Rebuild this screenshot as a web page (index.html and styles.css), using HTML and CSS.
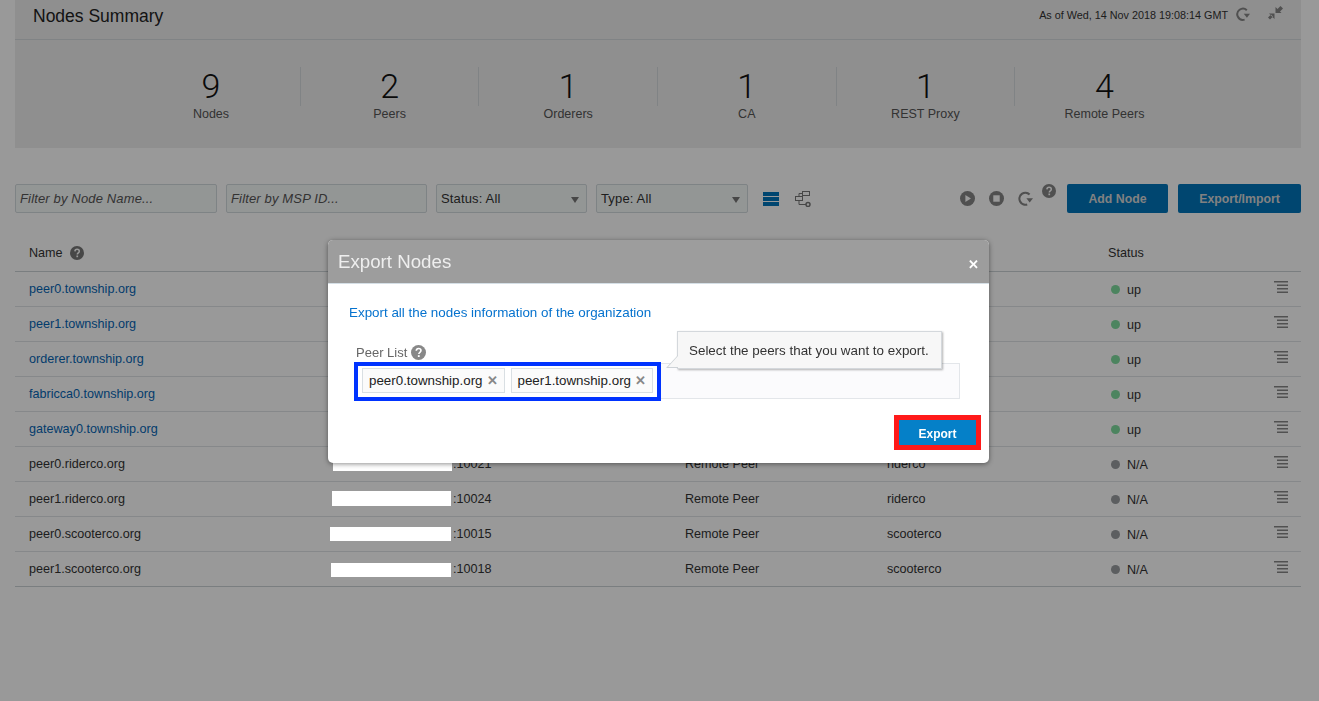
FILE: index.html
```html
<!DOCTYPE html>
<html lang="en">
<head>
    <meta charset="UTF-8">
    <title>Nodes Summary</title>
    <link rel="stylesheet" href="styles.css">
</head>
<body>

<svg class="sprite" width="0" height="0">
    <symbol id="i-refresh" viewBox="0 0 14 14">
        <path d="M10.8 3.200A5.600 5.600 0 1 0 8.600 12.600" fill="none" stroke="currentColor" stroke-width="2"/>
        <path d="M7.800 6.800h6.200l-3.100 4z" fill="currentColor"/>
    </symbol>
    <symbol id="i-help" viewBox="0 0 14 14">
        <circle cx="7" cy="7" r="7" fill="currentColor"/>
        <path d="M4.900 5.400C5 4 5.900 3.300 7.100 3.300c1.300 0 2.200.8 2.200 1.900 0 1.700-2 1.600-2 3.300" fill="none" stroke="#fff" stroke-width="1.500"/>
        <rect x="6.400" y="9.500" width="1.700" height="1.700" fill="#fff"/>
    </symbol>
    <symbol id="i-menu" viewBox="0 0 14 13">
        <rect x="0" y="0" width="14" height="1.500" fill="currentColor"/>
        <rect x="3" y="3.500" width="11" height="1.500" fill="currentColor"/>
        <rect x="3" y="7" width="11" height="1.500" fill="currentColor"/>
        <rect x="3" y="10.500" width="11" height="1.500" fill="currentColor"/>
    </symbol>
</svg>

<div class="page">
    <section class="summary">
        <div class="summary-head">
            <h1>Nodes Summary</h1>
            <div class="as-of">
                <span>As of Wed, 14 Nov 2018 19:08:14 GMT</span>
                <svg class="ic-refresh"><use href="#i-refresh"/></svg>
                <svg class="ic-collapse" viewBox="0 0 15 14">
                    <path d="M7.500 1v6h6zM9.500 3l3-3L15 2.500l-3 3zM6.500 13V7.500H1zM5 10.500l-3 3L0 11.500l3-3z" fill="currentColor"/>
                </svg>
            </div>
        </div>
        <div class="stats">
            <div class="stat"><div class="stat-num">9</div><div class="stat-label">Nodes</div></div>
            <div class="stat"><div class="stat-num">2</div><div class="stat-label">Peers</div></div>
            <div class="stat"><div class="stat-num">1</div><div class="stat-label">Orderers</div></div>
            <div class="stat"><div class="stat-num">1</div><div class="stat-label">CA</div></div>
            <div class="stat"><div class="stat-num">1</div><div class="stat-label">REST Proxy</div></div>
            <div class="stat"><div class="stat-num">4</div><div class="stat-label">Remote Peers</div></div>
        </div>
    </section>

    <div class="toolbar">
        <input class="filter filter-name" type="text" placeholder="Filter by Node Name...">
        <input class="filter filter-msp" type="text" placeholder="Filter by MSP ID...">
        <div class="select select-status">Status: All</div>
        <div class="select select-type">Type: All</div>
        <svg class="ic-list" viewBox="0 0 16 14">
            <rect width="16" height="4" fill="currentColor"/>
            <rect y="5" width="16" height="4" fill="currentColor"/>
            <rect y="10" width="16" height="4" fill="currentColor"/>
        </svg>
        <svg class="ic-topo" viewBox="0 0 16 16">
            <g fill="none" stroke="currentColor" stroke-width="1">
                <rect x="7.500" y="0.500" width="7" height="4"/>
                <rect x="0.500" y="5.500" width="7" height="4"/>
                <path d="M7.500 2.500H4v3M4 9.500v4h7"/>
                <circle cx="13" cy="13.500" r="2" stroke-width="1.500"/>
            </g>
        </svg>
        <div class="actions">
            <svg class="ic-round" viewBox="0 0 14 14">
                <circle cx="7" cy="7" r="7" fill="currentColor"/>
                <path d="M5 3.800v6.400L10.200 7z" fill="#fff"/>
            </svg>
            <svg class="ic-round" viewBox="0 0 14 14">
                <circle cx="7" cy="7" r="7" fill="currentColor"/>
                <rect x="4" y="4" width="6" height="6" fill="#fff"/>
            </svg>
            <svg class="ic-round"><use href="#i-refresh"/></svg>
            <svg class="ic-help-top"><use href="#i-help"/></svg>
        </div>
        <button class="btn btn-add">Add Node</button>
        <button class="btn btn-export">Export/Import</button>
    </div>

    <div class="table">
        <div class="row row-head">
            <div class="name-head">Name <svg class="ic-help"><use href="#i-help"/></svg></div>
            <div></div>
            <div></div>
            <div></div>
            <div>Status</div>
        </div>
        <div class="row">
            <div><a href="#">peer0.township.org</a></div><div></div><div></div><div></div>
            <div class="status"><i class="dot dot-up"></i>up</div>
            <svg class="ic-menu"><use href="#i-menu"/></svg>
        </div>
        <div class="row">
            <div><a href="#">peer1.township.org</a></div><div></div><div></div><div></div>
            <div class="status"><i class="dot dot-up"></i>up</div>
            <svg class="ic-menu"><use href="#i-menu"/></svg>
        </div>
        <div class="row">
            <div><a href="#">orderer.township.org</a></div><div></div><div></div><div></div>
            <div class="status"><i class="dot dot-up"></i>up</div>
            <svg class="ic-menu"><use href="#i-menu"/></svg>
        </div>
        <div class="row">
            <div><a href="#">fabricca0.township.org</a></div><div></div><div></div><div></div>
            <div class="status"><i class="dot dot-up"></i>up</div>
            <svg class="ic-menu"><use href="#i-menu"/></svg>
        </div>
        <div class="row">
            <div><a href="#">gateway0.township.org</a></div><div></div><div></div><div></div>
            <div class="status"><i class="dot dot-up"></i>up</div>
            <svg class="ic-menu"><use href="#i-menu"/></svg>
        </div>
        <div class="row">
            <div>peer0.riderco.org</div><div class="addr">:10021</div><div>Remote Peer</div><div>riderco</div>
            <div class="status"><i class="dot"></i>N/A</div>
            <svg class="ic-menu"><use href="#i-menu"/></svg>
        </div>
        <div class="row">
            <div>peer1.riderco.org</div><div class="addr">:10024</div><div>Remote Peer</div><div>riderco</div>
            <div class="status"><i class="dot"></i>N/A</div>
            <svg class="ic-menu"><use href="#i-menu"/></svg>
        </div>
        <div class="row">
            <div>peer0.scooterco.org</div><div class="addr">:10015</div><div>Remote Peer</div><div>scooterco</div>
            <div class="status"><i class="dot"></i>N/A</div>
            <svg class="ic-menu"><use href="#i-menu"/></svg>
        </div>
        <div class="row">
            <div>peer1.scooterco.org</div><div class="addr">:10018</div><div>Remote Peer</div><div>scooterco</div>
            <div class="status"><i class="dot"></i>N/A</div>
            <svg class="ic-menu"><use href="#i-menu"/></svg>
        </div>
    </div>
</div>

<div class="backdrop"></div>

<!-- white blocks hiding the host addresses -->
<div class="redact redact-1"></div>
<div class="redact redact-2"></div>
<div class="redact redact-3"></div>
<div class="redact redact-4"></div>

<div class="modal">
    <div class="modal-head">
        <h2>Export Nodes</h2>
        <span class="modal-close">&#10005;</span>
    </div>
    <div class="modal-body">
        <p class="modal-intro">Export all the nodes information of the organization</p>
        <div class="peer-field">
            <label class="peer-label">Peer List <svg class="ic-help ic-help-light"><use href="#i-help"/></svg></label>
            <div class="peer-box">
                <div class="tags-mark">
                    <span class="tag">peer0.township.org <b>&#10005;</b></span>
                    <span class="tag">peer1.township.org <b>&#10005;</b></span>
                </div>
            </div>
            <div class="tip">Select the peers that you want to export.</div>
        </div>
        <div class="modal-foot">
            <div class="export-mark"><button class="btn-primary">Export</button></div>
        </div>
    </div>
</div>

</body>
</html>
```

FILE: styles.css
```css
* {
    box-sizing: border-box;
}
html, body {
    height: 100%;
}
body {
    margin: 0;
    font-family: "Liberation Sans", Arial, sans-serif;
    font-size: 13px;
    color: #333;
    background-color: #fff;
    overflow: hidden;
}
.sprite {
    display: block;
    position: absolute;
}
.page {
    padding: 0 18px 0 15px;
}

/* summary panel */
.summary {
    height: 148px;
    background-color: #eeeeee;
}
.summary-head {
    height: 40px;
    border-bottom: 1px solid #d6dbde;
    display: flex;
    justify-content: space-between;
    padding: 0 18px;
}
.summary-head h1 {
    margin: 5px 0 0;
    font-size: 17.500px;
    font-weight: normal;
    line-height: 22px;
    color: #222;
}
.as-of {
    display: flex;
    align-items: flex-start;
    font-size: 10.800px;
    padding-top: 9px;
    color: #333;
}
.ic-refresh {
    width: 14px;
    height: 14px;
    margin: -2px 0 0 8px;
    color: #858585;
}
.ic-collapse {
    width: 15px;
    height: 14px;
    margin: -3px 0 0 18px;
    color: #858585;
}
.stats {
    display: flex;
    justify-content: center;
    padding-top: 27px;
}
.stat {
    width: 178.600px;
    height: 39px;
    text-align: center;
    border-right: 1px solid #d6dbde;
}
.stat:last-child {
    border-right: none;
}
.stat-num {
    font-family: Roboto, "Liberation Sans", sans-serif;
    font-weight: 300;
    font-size: 34px;
    line-height: 38px;
    color: #111;
}
.stat-label {
    font-size: 12.500px;
    line-height: 16px;
    margin-top: 1px;
    color: #555;
}

/* toolbar */
.toolbar {
    display: flex;
    align-items: center;
    margin-top: 36px;
    height: 29px;
}
.filter, .select {
    height: 29px;
    background-color: #f6faf9;
    border: 1px solid #d3dade;
    border-radius: 2px;
    font-family: inherit;
    font-size: 13px;
    letter-spacing: 0.150px;
    padding: 0 4px;
    color: #333;
}
.filter::placeholder {
    font-style: italic;
    color: #555;
    opacity: 1;
}
.filter-name {
    width: 202px;
    margin-right: 9px;
}
.filter-msp {
    width: 201px;
    margin-right: 9px;
}
.select {
    line-height: 27px;
    position: relative;
}
.select::after {
    content: "";
    position: absolute;
    right: 7px;
    top: 12px;
    border-left: 4px solid transparent;
    border-right: 4px solid transparent;
    border-top: 6px solid #777;
}
.select-status {
    width: 151px;
    margin-right: 9px;
}
.select-type {
    width: 152px;
    margin-right: 15px;
}
.ic-list {
    width: 16px;
    height: 14px;
    color: #0075bb;
    margin-right: 16px;
}
.ic-topo {
    width: 16px;
    height: 16px;
    color: #777;
}
.actions {
    display: flex;
    align-items: center;
    margin-left: auto;
    position: relative;
    margin-right: 11px;
    color: #858585;
}
.ic-round {
    width: 15px;
    height: 15px;
    margin-right: 14px;
}
.ic-help-top {
    width: 14px;
    height: 14px;
    margin: -15px 0 0 -5px;
}
.btn {
    height: 29px;
    border: none;
    border-radius: 2px;
    background-color: #0075bb;
    color: #d8d8d8;
    font-family: inherit;
    font-size: 12.300px;
    font-weight: bold;
}
.btn-add {
    width: 101px;
    margin-right: 10px;
}
.btn-export {
    width: 123px;
}

/* nodes table */
.table {
    margin-top: 22px;
}
.row {
    display: grid;
    grid-template-columns: 303px 353px 202px 221px 1fr;
    align-items: center;
    height: 35px;
    padding: 0 0 1px 14px;
    border-bottom: 1px solid #dfe3e6;
    font-size: 12.600px;
    position: relative;
}
.row:last-child {
    border-bottom-color: #ccd2d6;
}
.row-head {
    height: 37px;
    border-bottom-color: #ccd2d6;
}
.name-head {
    display: flex;
    align-items: center;
    gap: 7px;
}
.row a {
    color: #0565b5;
    text-decoration: none;
}
.addr {
    padding-left: 121px;
}
.status {
    display: flex;
    align-items: center;
    padding: 2px 0 0 3px;
}
.dot {
    width: 9px;
    height: 9px;
    border-radius: 50%;
    background-color: #999da0;
    margin-right: 7px;
}
.dot-up {
    background-color: #7fdc9f;
}
.ic-help {
    width: 14px;
    height: 14px;
    color: #777;
}
.ic-menu {
    position: absolute;
    right: 13px;
    top: 9px;
    width: 14px;
    height: 13px;
    color: #888;
}

/* overlay and redaction */
.backdrop {
    position: fixed;
    inset: 0;
    background-color: rgba(0, 0, 0, 0.4);
}
.redact {
    position: absolute;
    background-color: #fff;
}
.redact-1 { left: 333px; top: 460px; width: 119px; height: 11px; }
.redact-2 { left: 332px; top: 491px; width: 119px; height: 15px; }
.redact-3 { left: 330px; top: 527px; width: 121px; height: 14px; }
.redact-4 { left: 331px; top: 563px; width: 120px; height: 14px; }

/* export dialog */
.modal {
    position: absolute;
    left: 328px;
    top: 240px;
    width: 661px;
    height: 223px;
    background-color: #fff;
    border-radius: 5px;
    box-shadow: 0 1px 5px rgba(0, 0, 0, 0.45);
    overflow: hidden;
}
.modal-head {
    height: 44px;
    background-color: #9d9d9d;
    border-bottom: 1px solid #d5dfe6;
    padding: 0 10px;
    display: flex;
    justify-content: space-between;
}
.modal-head h2 {
    margin: 10px 0 0;
    font-size: 18.700px;
    font-weight: normal;
    line-height: 23px;
    color: #eee;
}
.modal-close {
    margin-top: 17px;
    font-size: 13px;
    font-weight: bold;
    line-height: 15px;
    color: #fff;
}
.modal-body {
    padding: 21px 29px 0 21px;
}
.modal-intro {
    margin: 0;
    font-size: 13.400px;
    line-height: 16px;
    color: #0572ce;
}
.peer-field {
    position: relative;
    margin-top: 22px;
    padding-left: 7px;
}
.peer-label {
    display: flex;
    align-items: center;
    gap: 4px;
    height: 18px;
    font-size: 13px;
    color: #666;
}
.ic-help-light {
    width: 15px;
    height: 15px;
    color: #888;
}
.peer-box {
    margin: 2px 0 0 1px;
    height: 36px;
    background-color: #fbfbfd;
    border: 1px solid #e3e6ea;
    display: flex;
    align-items: flex-start;
}
.tags-mark {
    display: flex;
    gap: 6px;
    margin: -2px 0 0 -4px;
    padding: 2px 4px;
    height: 39px;
    width: 307px;
    border: 4px solid #0033ff;
    background-color: #fff;
}
.tag {
    display: flex;
    align-items: center;
    justify-content: space-between;
    height: 25px;
    padding: 0 6px;
    background-color: #fbfbfb;
    border: 1px solid #d9dfe3;
    font-size: 13.350px;
    color: #222;
    white-space: nowrap;
}
.tag b {
    color: #888;
    font-size: 13px;
    margin-left: 4px;
}
.tip {
    position: absolute;
    left: 328px;
    top: -12px;
    width: 265px;
    height: 38px;
    padding-left: 11px;
    line-height: 38px;
    font-size: 13.400px;
    white-space: nowrap;
    color: #333;
    background-color: #f7f7f7;
    border: 1px solid #d4d8dc;
    box-shadow: 1px 1px 2px rgba(0, 0, 0, 0.3);
}
.tip::before, .tip::after {
    content: "";
    position: absolute;
    width: 0;
    height: 0;
    border-left-style: solid;
    border-bottom-style: solid;
    border-left-color: transparent;
}
.tip::before {
    left: -12px;
    bottom: 0;
    border-left-width: 12px;
    border-bottom-width: 13px;
    border-bottom-color: #cdd2d6;
}
.tip::after {
    left: -10px;
    bottom: 1px;
    border-left-width: 10px;
    border-bottom-width: 11px;
    border-bottom-color: #f7f7f7;
}
.modal-foot {
    display: flex;
    justify-content: flex-end;
    margin: 16px -21px 0 0;
}
.export-mark {
    border: 5px solid #ff1a1a;
}
.btn-primary {
    display: block;
    width: 77px;
    height: 25px;
    padding: 2px 0 0;
    border: none;
    background-color: #0580c8;
    color: #fff;
    font-family: inherit;
    font-size: 12px;
    font-weight: bold;
}
```
